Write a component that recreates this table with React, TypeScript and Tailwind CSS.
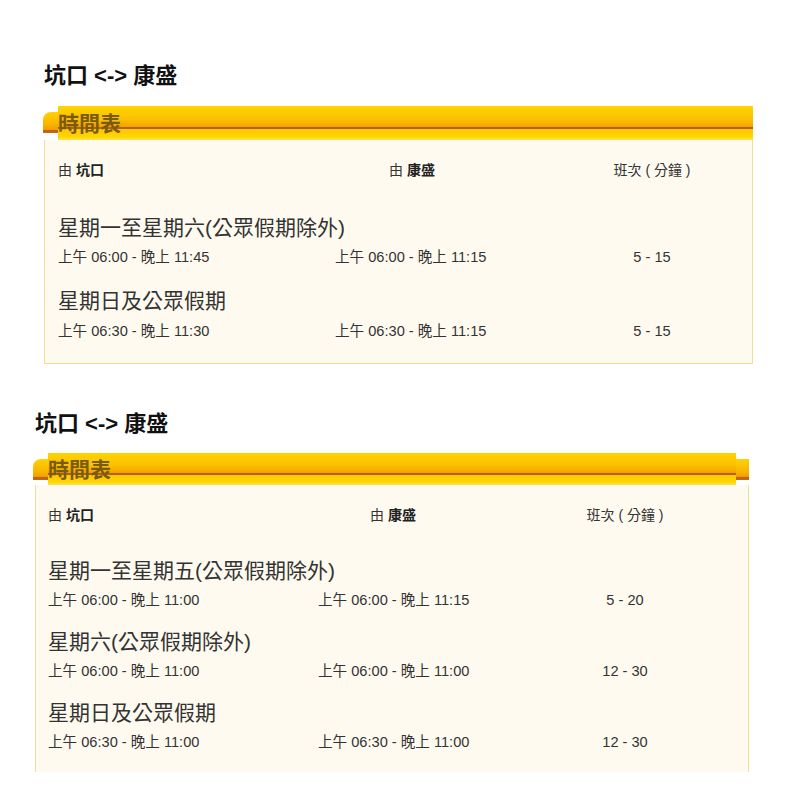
import React from 'react'

const FONT = "font-['Liberation_Sans','Noto_Sans_CJK_TC',sans-serif]"

const BAR_BG =
  'bg-[linear-gradient(to_bottom,#ffd400_0%,#fbbf00_40%,#f3a300_61%,#b4601c_61%,#b4601c_68%,#ffc800_68%,#ffd500_90%,#ffe24a_100%)]'
const TAB_BG =
  'bg-[linear-gradient(to_bottom,#ffd200_0%,#f7b400_60%,#f09c00_86%,#bb6218_86%,#c86a10_100%)]'

interface Row {
  day: string
  from: string
  to: string
  freq: string
}

const route1: Row[] = [
  { day: '星期一至星期六(公眾假期除外)', from: '上午 06:00 - 晚上 11:45', to: '上午 06:00 - 晚上 11:15', freq: '5 - 15' },
  { day: '星期日及公眾假期', from: '上午 06:30 - 晚上 11:30', to: '上午 06:30 - 晚上 11:15', freq: '5 - 15' },
]

const route2: Row[] = [
  { day: '星期一至星期五(公眾假期除外)', from: '上午 06:00 - 晚上 11:00', to: '上午 06:00 - 晚上 11:15', freq: '5 - 20' },
  { day: '星期六(公眾假期除外)', from: '上午 06:00 - 晚上 11:00', to: '上午 06:00 - 晚上 11:00', freq: '12 - 30' },
  { day: '星期日及公眾假期', from: '上午 06:30 - 晚上 11:00', to: '上午 06:30 - 晚上 11:00', freq: '12 - 30' },
]

const BarTitle: React.FC<{ extra?: boolean; tall?: boolean }> = ({ extra, tall }) => (
  <div className="flex items-start">
    <div className={`mt-[6px] h-[21px] w-[15px] shrink-0 rounded-tl-[8px] ${TAB_BG}`} />
    <div className={`flex flex-1 items-center ${tall ? 'h-[34px]' : 'h-[32px]'} ${BAR_BG}`}>
      <span className="pt-[1px] text-[21px] font-bold leading-none text-[#7a5a0c]">時間表</span>
    </div>
    {extra && <div className={`mt-[6px] h-[21px] w-[13px] shrink-0 ${TAB_BG}`} />}
  </div>
)

export default function App() {
  return (
    <div className={`min-h-[800px] bg-white ${FONT}`}>
      {/* first route */}
      <section className="ml-[43px] w-[710px] pt-[62px]">
        <h2 className="h-[28px] pl-[1px] text-[22px] font-bold leading-[28px] text-[#111]">坑口 &lt;-&gt; 康盛</h2>
        <div className="mt-[16px]">
          <BarTitle tall />
        </div>
        <div className="ml-[1px] border border-t-0 border-[#f1df94] bg-[#fefaef] px-[13px] pb-[23px] text-[#333]">
          <div className="grid h-[60px] grid-cols-[277px_257px_120px] items-center text-[14px]">
            <div>由 <b className="text-[#222]">坑口</b></div>
            <div className="pl-[54px]">由 <b className="text-[#222]">康盛</b></div>
            <div className="text-center">班次 ( 分鐘 )</div>
          </div>
          {route1.map((r, i) => (
            <div key={i} className={i === 0 ? 'mt-[14px]' : 'mt-[21px]'}>
              <div className="h-[28px] text-[21px] leading-[28px]">{r.day}</div>
              <div className={`${i === 0 ? 'mt-[6px]' : 'mt-[7px]'} grid h-[18px] grid-cols-[277px_257px_120px] text-[14.6px] leading-[18px]`}>
                <div>{r.from}</div>
                <div>{r.to}</div>
                <div className="text-center">{r.freq}</div>
              </div>
            </div>
          ))}
        </div>
      </section>

      {/* second route */}
      <section className="ml-[33px] w-[716px] pt-[46px]">
        <h2 className="h-[28px] pl-[2px] text-[22px] font-bold leading-[28px] text-[#111]">坑口 &lt;-&gt; 康盛</h2>
        <div className="mt-[15px]">
          <BarTitle extra />
        </div>
        <div className="ml-[2px] border border-y-0 border-[#f1df94] bg-[#fefaef] px-[12px] pb-[21px] text-[#333]">
          <div className="grid h-[60px] grid-cols-[270px_247px_120px] items-center text-[14px]">
            <div>由 <b className="text-[#222]">坑口</b></div>
            <div className="pl-[52px]">由 <b className="text-[#222]">康盛</b></div>
            <div className="text-center">班次 ( 分鐘 )</div>
          </div>
          {route2.map((r, i) => (
            <div key={i} className={i === 0 ? 'mt-[12px]' : 'mt-[19px]'}>
              <div className="h-[28px] text-[21px] leading-[28px]">{r.day}</div>
              <div className="mt-[6px] grid h-[18px] grid-cols-[270px_247px_120px] text-[14.6px] leading-[18px]">
                <div>{r.from}</div>
                <div>{r.to}</div>
                <div className="text-center">{r.freq}</div>
              </div>
            </div>
          ))}
        </div>
      </section>
    </div>
  )
}
